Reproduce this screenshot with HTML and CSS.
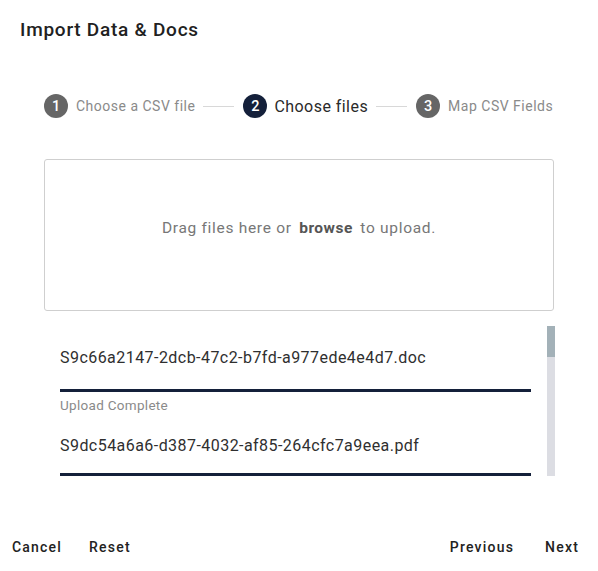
FILE: index.html
```html
<!DOCTYPE html>
<html>
<head>
<meta charset="utf-8">
<link rel="stylesheet" href="styles.css">
</head>
<body>
<div class="dialog">
  <h1 class="title">Import Data &amp; Docs</h1>
  <div class="stepper">
    <div class="step"><span class="num done">1</span><span class="label">Choose a CSV file</span></div>
    <span class="line"></span>
    <div class="step"><span class="num active">2</span><span class="label current">Choose files</span></div>
    <span class="line"></span>
    <div class="step"><span class="num done">3</span><span class="label">Map CSV Fields</span></div>
  </div>
  <div class="dropzone">
    <p>Drag files here or <b>browse</b> to upload.</p>
  </div>
  <div class="files">
    <div class="list">
      <div class="file">
        <div class="name">S9c66a2147-2dcb-47c2-b7fd-a977ede4e4d7.doc</div>
        <div class="bar"></div>
        <div class="status">Upload Complete</div>
      </div>
      <div class="file">
        <div class="name second">S9dc54a6a6-d387-4032-af85-264cfc7a9eea.pdf</div>
        <div class="bar"></div>
      </div>
    </div>
    <div class="scroll"><div class="thumb"></div></div>
  </div>
  <div class="actions">
    <div class="left"><button>Cancel</button><button>Reset</button></div>
    <div class="right"><button>Previous</button><button>Next</button></div>
  </div>
</div>
</body>
</html>
```
FILE: styles.css
```css
* { box-sizing: border-box; }
html, body { margin: 0; padding: 0; background: #fff; }
body { font-family: Roboto, "Noto Sans", sans-serif; color: #222; width: 598px; height: 571px; overflow: hidden; }
.dialog { display: flex; flex-direction: column; height: 571px; }
.title { margin: 0; padding: 19px 0 0 20px; font-size: 19px; font-weight: 500; line-height: 22px; color: #212121; letter-spacing: 0.75px; }
.stepper { display: flex; align-items: center; margin: 53px 0 0 44px; height: 24px; }
.step { display: flex; align-items: center; }
.num { width: 24px; height: 24px; border-radius: 50%; color: #fff; font-size: 14.5px; font-weight: 500; display: flex; align-items: center; justify-content: center; }
.num.done { background: #666; }
.num.active { background: #14203a; }
.label { margin-left: 8px; font-size: 14px; color: #8a8a8a; letter-spacing: 0.5px; }
.label.current { margin-left: 7px; font-size: 16px; color: #2a2a2a; letter-spacing: 0.45px; }
.line { width: 31px; height: 1px; background: #d8d8d8; margin: 0 9px 0 8px; }
.dropzone { margin: 41px 0 0 44px; width: 510px; height: 152px; border: 1px solid #cfcfcf; border-radius: 3px; display: flex; align-items: center; justify-content: center; }
.dropzone p { margin: 0 0 14px 0; font-size: 15.5px; color: #777; letter-spacing: 0.7px; }
.dropzone b { color: #555; font-weight: 700; margin: 0 3px; letter-spacing: 0.5px; }
.files { display: flex; margin: 14px 0 0 44px; height: 151px; overflow: hidden; width: 512px; }
.list { flex: 1; padding: 0 16px; }
.file .name { font-size: 16px; color: #2f2f2f; padding-top: 23px; line-height: 20px; letter-spacing: 0.45px; }
.file .name.second { padding-top: 23px; }
.bar { height: 3px; background: #14203a; margin-top: 21px; }
.file .name.second + .bar { margin-top: 17px; }
.status { font-size: 13.5px; color: #8a8a8a; margin-top: 5px; line-height: 16px; letter-spacing: 0.3px; }
.scroll { width: 8px; background: #dcdde3; margin-top: 1px; height: 150px; margin-right: 1px; }
.thumb { height: 31px; background: #a3b1b8; }
.actions { display: flex; justify-content: space-between; margin-top: auto; padding: 0 19px 14px 12px; }
.actions button { font-family: inherit; background: none; border: 0; padding: 0; font-size: 14px; font-weight: 500; color: #222; letter-spacing: 1.2px; line-height: 20px; cursor: pointer; }
.left button + button { margin-left: 27px; }
.right button + button { margin-left: 31px; }
```
